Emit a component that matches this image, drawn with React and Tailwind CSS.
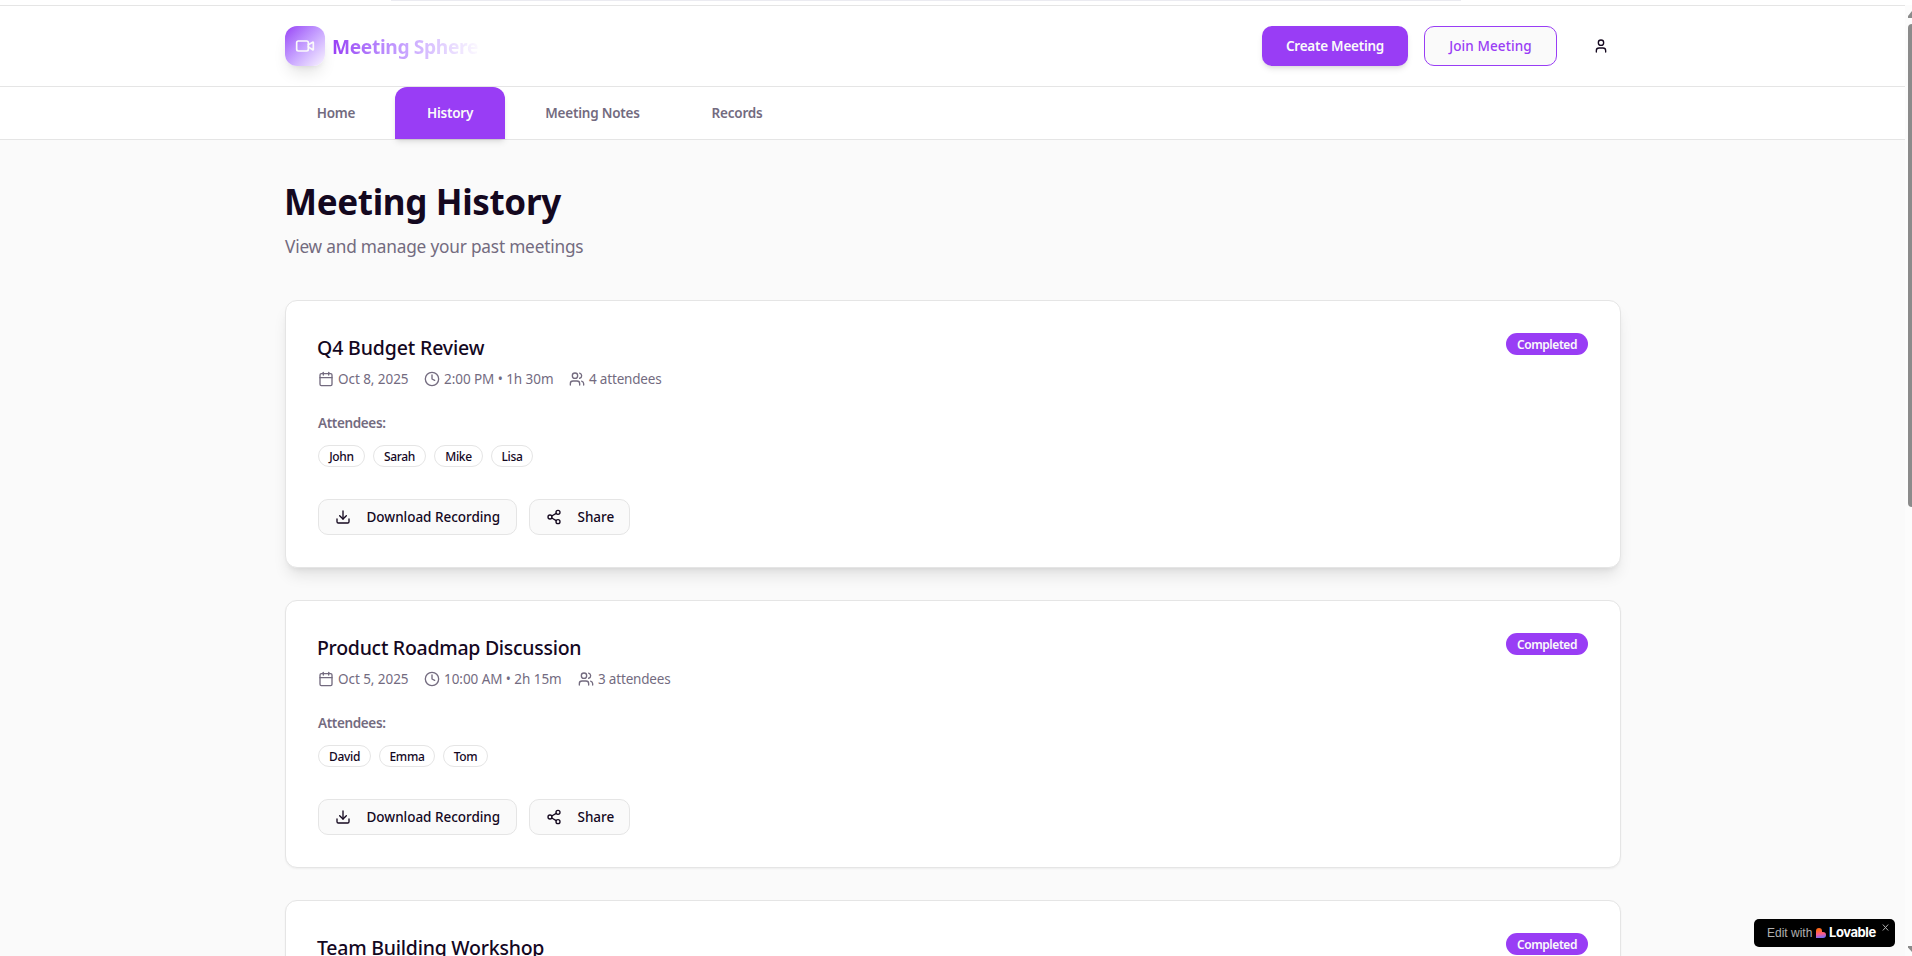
import React from 'react';
import { Calendar, Clock, Download, Share2, User, Users, Video } from 'lucide-react';

const MEETINGS = [
  {
    title: 'Q4 Budget Review',
    titleClass: 'tracking-[-0.14px]',
    date: 'Oct 8, 2025',
    time: '2:00 PM • 1h 30m',
    timeClass: 'w-[109px]',
    count: '4 attendees',
    people: [['John', 'w-[47px]'], ['Sarah', 'w-[53px]'], ['Mike', 'w-[49px]'], ['Lisa', 'w-[42px]']],
    cardClass: 'shadow-lg',
  },
  {
    title: 'Product Roadmap Discussion',
    titleClass: 'tracking-[-0.28px]',
    date: 'Oct 5, 2025',
    time: '10:00 AM • 2h 15m',
    timeClass: 'w-[118px]',
    count: '3 attendees',
    people: [['David', 'w-[53px]'], ['Emma', 'w-[56px]'], ['Tom', 'w-[45px]']],
    cardClass: 'shadow-xs',
  },
  {
    title: 'Team Building Workshop',
    titleClass: 'tracking-[-0.24px]',
    cardClass: 'shadow-xs',
  },
];

function Header() {
  return (
    <header className="h-[82px] shrink-0 border-y border-[#e5e5e5] bg-white">
      <div className="flex h-20 items-center justify-between pr-[284px] pl-[285px]">
        <div className="flex items-center gap-2">
          <div className="flex size-10 items-center justify-center rounded-xl bg-linear-to-br from-[#993df5] to-[#faf5ff] shadow-lg">
            <Video size={20} className="text-[#fafafa]" />
          </div>
          <span className="-ml-px w-[148px] bg-linear-to-r from-[#993df5] to-[#fdfbff] bg-clip-text pt-0.5 text-[19.2px] leading-7 font-bold tracking-[-0.35px] whitespace-nowrap text-transparent">
            Meeting Sphere
          </span>
        </div>
        <div className="flex items-center">
          <button className="h-10 w-[146px] rounded-[10px] bg-[#993df5] pt-px text-[13.5px] font-semibold tracking-[-0.25px] text-[#fafafa] shadow-md">
            Create Meeting
          </button>
          <button className="ml-4 h-10 w-[133px] rounded-[10px] border border-[#993df5] bg-[#fafafa] pt-px text-[13.5px] font-medium tracking-[0.1px] text-[#993df5]">
            Join Meeting
          </button>
          <button className="ml-6 flex size-10 items-center justify-center">
            <User size={16} />
          </button>
        </div>
      </div>
    </header>
  );
}

function Nav() {
  return (
    <nav className="flex h-[53px] shrink-0 gap-2 border-b border-[#e5e5e5] bg-white pl-[285px] text-[13.5px] font-semibold tracking-[-0.22px] whitespace-nowrap text-[#736b7f]">
      <a className="flex w-[102px] items-center justify-center">Home</a>
      <a className="flex w-[110px] items-center justify-center rounded-t-xl bg-[#993df5] text-[#fafafa] shadow-md">History</a>
      <a className="flex w-[159px] items-center justify-center">Meeting Notes</a>
      <a className="flex w-[114px] items-center justify-center">Records</a>
    </nav>
  );
}

function MeetingDetails({ meeting }) {
  return (
    <>
      <div className="mt-2 flex h-5 items-center gap-4 text-[13.5px] leading-5 whitespace-nowrap text-[#736b7f]">
        <span className="flex items-center gap-1">
          <Calendar size={16} />
          <span className="w-[70px] tracking-[-0.06px]">{meeting.date}</span>
        </span>
        <span className="flex items-center gap-1">
          <Clock size={16} />
          <span className={`tracking-[-0.06px] ${meeting.timeClass}`}>{meeting.time}</span>
        </span>
        <span className="flex items-center gap-1">
          <Users size={16} />
          <span className="tracking-[-0.18px]">{meeting.count}</span>
        </span>
      </div>
      <p className="mt-6 text-[13.5px] leading-5 font-semibold tracking-[-0.36px] text-[#736b7f]">Attendees:</p>
      <div className="mt-3 flex gap-2">
        {meeting.people.map(([name, width]) => (
          <span key={name} className={`flex h-[22px] items-center justify-center rounded-full border border-[#e5e5e5] pt-px text-[12px] font-medium tracking-[-0.3px] ${width}`}>
            {name}
          </span>
        ))}
      </div>
      <div className="mt-8 flex gap-3 text-[13.5px] font-medium tracking-[-0.03px]">
        <button className="flex h-9 w-[199px] items-center gap-[15.5px] rounded-[10px] border border-[#e5e5e5] bg-[#fafafa] pl-4 whitespace-nowrap">
          <Download size={16} />
          Download Recording
        </button>
        <button className="flex h-9 w-[101px] items-center gap-[15.5px] rounded-[10px] border border-[#e5e5e5] bg-[#fafafa] pl-4">
          <Share2 size={16} />
          Share
        </button>
      </div>
    </>
  );
}

function MeetingCard({ meeting }) {
  return (
    <article className={`h-[268px] rounded-xl border border-[#e5e5e5] bg-white px-8 pt-8 ${meeting.cardClass}`}>
      <div className="flex h-7 items-start justify-between">
        <h3 className={`mt-px -ml-px text-[19.5px] leading-7 font-medium ${meeting.titleClass}`}>{meeting.title}</h3>
        <span className="flex h-[22px] w-[82px] items-center justify-center rounded-full bg-[#993df5] pt-0.5 text-[12px] font-semibold tracking-[-0.42px] text-[#fafafa]">
          Completed
        </span>
      </div>
      {meeting.people && <MeetingDetails meeting={meeting} />}
    </article>
  );
}

function LovableBadge() {
  return (
    <div className="absolute top-[919px] left-[1754px] flex h-7 w-[141px] items-center rounded-[5px] bg-black pl-[13px] whitespace-nowrap">
      <span className="w-[49px] font-['Liberation_Sans',sans-serif] text-[12px] text-[#b0b0b0]">Edit with</span>
      <svg width="10" height="10" viewBox="0 0 10 10" className="mr-[3px]">
        <defs>
          <linearGradient id="heart" x1="0.4" y1="0" x2="0.55" y2="1">
            <stop offset="0.2" stopColor="#ff6a1f" />
            <stop offset="0.6" stopColor="#fb5a8e" />
            <stop offset="1" stopColor="#6c6cff" />
          </linearGradient>
        </defs>
        <path d="M0 3a3 3 0 0 1 6 0v1h1a3 3 0 0 1 0 6H0Z" fill="url(#heart)" />
      </svg>
      <span className="font-['Inter',sans-serif] text-[13px] font-bold tracking-[-0.44px] text-white">Lovable</span>
      <svg width="7" height="7" viewBox="0 0 7 7" className="absolute top-[5px] right-[6px]">
        <path d="M0.8 0.5 6.2 6.5M6.2 0.5 0.8 6.5" stroke="#b0b0b0" strokeWidth="1" />
      </svg>
    </div>
  );
}

function Scrollbar() {
  return (
    <div className="flex w-[7px] flex-col items-end bg-[#fcfcfc] pt-[6px]">
      <svg width="4" height="7" viewBox="0 0 4 7">
        <path d="M4 0 0 5v2h4Z" fill="#8b8b8b" />
      </svg>
      <div className="mt-[6px] h-[483px] w-1 rounded-l-full bg-[#8b8b8b]" />
      <svg width="4" height="6" viewBox="0 0 4 6" className="mt-auto mb-1">
        <path d="M0 0h4v6L0 1.5Z" fill="#8b8b8b" />
      </svg>
    </div>
  );
}

export default function App() {
  return (
    <div className="relative flex h-[956px] w-[1912px] flex-col overflow-hidden bg-white font-['Noto_Sans','Open_Sans',sans-serif] text-[#14081f]">
      <div className="h-[5px] shrink-0">
        <div className="ml-[391px] h-px w-[1070px] bg-[#ebebf1]" />
      </div>
      <div className="flex min-h-0 flex-1">
        <div className="flex w-[1905px] flex-col bg-[#fafafa]">
          <Header />
          <Nav />
          <main className="shrink-0 pt-10 pr-[284px] pl-[285px]">
            <h1 className="mt-[2px] -ml-px text-[35px] leading-10 font-bold tracking-[-0.34px] whitespace-nowrap">Meeting History</h1>
            <p className="mt-[11px] text-[17.25px] leading-7 tracking-[-0.2px] text-[#736b7f]">View and manage your past meetings</p>
            <div className="mt-[39px] flex flex-col gap-8">
              {MEETINGS.map((m) => (
                <MeetingCard key={m.title} meeting={m} />
              ))}
            </div>
          </main>
        </div>
        <Scrollbar />
      </div>
      <LovableBadge />
    </div>
  );
}
